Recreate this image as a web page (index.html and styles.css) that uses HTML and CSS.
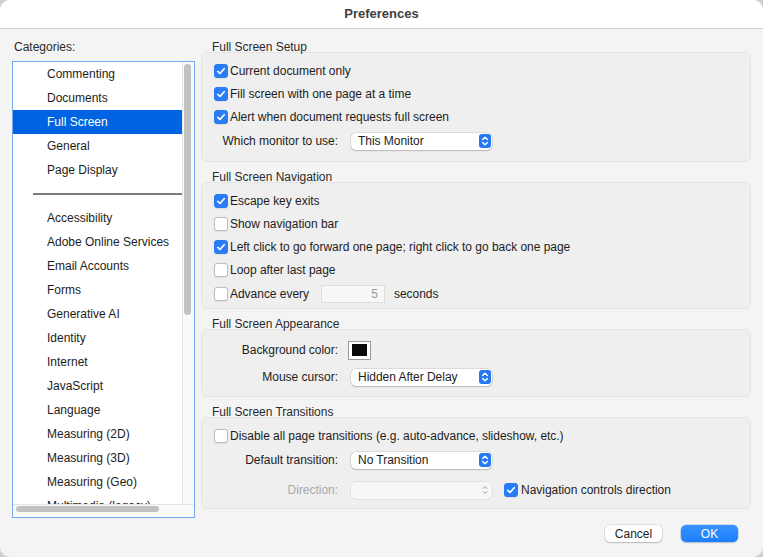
FILE: index.html
```html
<!DOCTYPE html>
<html lang="en">
<head>
  <meta charset="UTF-8">
  <title>Preferences</title>
  <link rel="stylesheet" href="styles.css">
</head>
<body>
  <div class="window">
    <header class="titlebar">Preferences</header>
    <div class="content">
      <aside class="sidebar">
        <div class="sidebar-label">Categories:</div>
        <div class="listbox">
          <div class="list-main">
            <ul class="categories">
              <li>Commenting</li>
              <li>Documents</li>
              <li class="selected">Full Screen</li>
              <li>General</li>
              <li>Page Display</li>
              <li class="sep"></li>
              <li>Accessibility</li>
              <li>Adobe Online Services</li>
              <li>Email Accounts</li>
              <li>Forms</li>
              <li>Generative AI</li>
              <li>Identity</li>
              <li>Internet</li>
              <li>JavaScript</li>
              <li>Language</li>
              <li>Measuring (2D)</li>
              <li>Measuring (3D)</li>
              <li>Measuring (Geo)</li>
              <li>Multimedia (legacy)</li>
            </ul>
            <div class="vscroll"><div class="vthumb"></div></div>
          </div>
          <div class="hscroll"><div class="hthumb"></div></div>
        </div>
      </aside>

      <main class="panel">
        <section class="group">
          <h2>Full Screen Setup</h2>
          <div class="group-box setup">
            <div class="row"><span class="box on"><svg viewBox="0 0 14 14"><path d="M3.3 7.4l2.5 2.5 4.9-5.6"/></svg></span>Current document only</div>
            <div class="row"><span class="box on"><svg viewBox="0 0 14 14"><path d="M3.3 7.4l2.5 2.5 4.9-5.6"/></svg></span>Fill screen with one page at a time</div>
            <div class="row"><span class="box on"><svg viewBox="0 0 14 14"><path d="M3.3 7.4l2.5 2.5 4.9-5.6"/></svg></span>Alert when document requests full screen</div>
            <div class="row field">
              <span class="field-label">Which monitor to use:</span>
              <div class="select">This Monitor
                <svg class="stepper" viewBox="0 0 12 14"><rect width="12" height="14" rx="3"/><path d="M3.6 5.6L6 3.2l2.4 2.4M3.6 8.4L6 10.8l2.4-2.4"/></svg>
              </div>
            </div>
          </div>
        </section>

        <section class="group">
          <h2>Full Screen Navigation</h2>
          <div class="group-box nav">
            <div class="row"><span class="box on"><svg viewBox="0 0 14 14"><path d="M3.3 7.4l2.5 2.5 4.9-5.6"/></svg></span>Escape key exits</div>
            <div class="row"><span class="box"></span>Show navigation bar</div>
            <div class="row"><span class="box on"><svg viewBox="0 0 14 14"><path d="M3.3 7.4l2.5 2.5 4.9-5.6"/></svg></span>Left click to go forward one page; right click to go back one page</div>
            <div class="row"><span class="box"></span>Loop after last page</div>
            <div class="row field">
              <span class="box"></span>Advance every
              <span class="number">5</span>
              <span class="unit">seconds</span>
            </div>
          </div>
        </section>

        <section class="group">
          <h2>Full Screen Appearance</h2>
          <div class="group-box look">
            <div class="row field">
              <span class="field-label">Background color:</span>
              <span class="swatch"><span class="swatch-fill"></span></span>
            </div>
            <div class="row field tall">
              <span class="field-label">Mouse cursor:</span>
              <div class="select">Hidden After Delay
                <svg class="stepper" viewBox="0 0 12 14"><rect width="12" height="14" rx="3"/><path d="M3.6 5.6L6 3.2l2.4 2.4M3.6 8.4L6 10.8l2.4-2.4"/></svg>
              </div>
            </div>
          </div>
        </section>

        <section class="group">
          <h2>Full Screen Transitions</h2>
          <div class="group-box trans">
            <div class="row"><span class="box"></span>Disable all page transitions (e.g. auto-advance, slideshow, etc.)</div>
            <div class="row field">
              <span class="field-label">Default transition:</span>
              <div class="select">No Transition
                <svg class="stepper" viewBox="0 0 12 14"><rect width="12" height="14" rx="3"/><path d="M3.6 5.6L6 3.2l2.4 2.4M3.6 8.4L6 10.8l2.4-2.4"/></svg>
              </div>
            </div>
            <div class="row field taller">
              <span class="field-label disabled">Direction:</span>
              <div class="select off">
                <svg class="stepper" viewBox="0 0 12 14"><path d="M4 5.4L6 3.6l2 1.8M4 8.6L6 10.4l2-1.8"/></svg>
              </div>
              <span class="box on gap"><svg viewBox="0 0 14 14"><path d="M3.3 7.4l2.5 2.5 4.9-5.6"/></svg></span>Navigation controls direction
            </div>
          </div>
        </section>
      </main>
    </div>
    <footer class="buttons">
      <button class="btn">Cancel</button>
      <button class="btn primary">OK</button>
    </footer>
  </div>
</body>
</html>
```

FILE: styles.css
```css
body { margin: 0; background: #cfcfcf; font-family: "Liberation Sans", Arial, sans-serif; font-size: 12px; color: #1d1d1d; }
.window { width: 763px; height: 557px; background: #f4f4f4; border-radius: 10px; overflow: hidden; }
.titlebar { height: 28px; line-height: 28px; background: #fff; border-bottom: 1px solid #d2d2d2; text-align: center; font-size: 13px; font-weight: bold; color: #404040; }
.content { display: flex; }

/* category list */
.sidebar { width: 183px; padding: 12px 0 0 12px; }
.sidebar-label { line-height: 12px; margin: 0 0 8px 2px; color: #2a2a2a; }
.listbox { height: 455px; border: 1px solid #78a8ec; background: #fff; display: flex; flex-direction: column; }
.list-main { flex: 1; display: flex; overflow: hidden; }
.categories { list-style: none; margin: 0; padding: 0; flex: 1; overflow: hidden; }
.categories li { height: 24px; line-height: 24px; padding-left: 34px; white-space: nowrap; }
.categories li.selected { background: #0063e1; color: #fff; }
.categories li.sep { position: relative; }
.categories li.sep::after { content: ""; position: absolute; left: 20px; right: 0; top: 11px; height: 2px; background: #7d7d7d; }
.vscroll { width: 10px; background: #fafafa; border-left: 1px solid #e6e6e6; padding: 2px 0 0 1px; }
.vthumb { width: 7px; height: 251px; border-radius: 4px; background: #c2c2c2; }
.hscroll { height: 11px; border-top: 1px solid #e6e6e6; background: #fafafa; padding: 1px 0 0 3px; }
.hthumb { width: 143px; height: 6px; border-radius: 3px; background: #c2c2c2; }

/* settings groups */
.panel { flex: 1; padding: 12px 12px 0 6px; letter-spacing: -0.03px; }
.group { margin-bottom: 9px; }
.group h2 { margin: 0 0 0 11px; font-size: 12px; font-weight: normal; line-height: 12px; color: #2a2a2a; }
.group-box { margin-top: -1px; background: #efefef; border: 1px solid #e4e4e4; border-radius: 6px; padding-left: 12px; }
.setup { padding-top: 6px; padding-bottom: 7px; }
.nav { padding-top: 6px; padding-bottom: 1px; }
.look { padding-top: 7px; padding-bottom: 5px; }
.trans { padding-top: 6px; padding-bottom: 1px; }

.row { display: flex; align-items: center; height: 23px; white-space: nowrap; }
.row.field { height: 26px; }
.row.tall { height: 28px; }
.row.taller { height: 34px; }
.field-label { width: 124px; text-align: right; margin-right: 13px; }
.field-label.disabled { color: #a9a9a9; }

.box { width: 12px; height: 12px; border: 1px solid #bdbdbd; border-radius: 3px; background: #fff; margin-right: 2px; flex: none; box-shadow: 0 0.5px 1px rgba(0,0,0,0.08); }
.box.on { background: #2a7cf6; border-color: #2a7cf6; }
.box svg { display: block; width: 12px; height: 12px; fill: none; stroke: #fff; stroke-width: 1.9; stroke-linecap: round; stroke-linejoin: round; }
.box.gap { margin-left: 12px; margin-right: 3px; }

.select { width: 133px; height: 17px; padding: 0 1px 0 7px; background: #fff; border-radius: 5px; display: flex; align-items: center; justify-content: space-between; box-shadow: 0 0 0 0.5px rgba(0,0,0,0.16), 0 1px 1.5px rgba(0,0,0,0.16); }
.select.off { justify-content: flex-end; background: #f7f7f7; box-shadow: 0 0 0 0.5px rgba(0,0,0,0.1); }
.stepper { width: 12px; height: 14px; flex: none; }
.stepper rect { fill: #2478f3; }
.stepper path { fill: none; stroke: #fff; stroke-width: 1.4; stroke-linecap: round; stroke-linejoin: round; }
.select.off .stepper path { stroke: #b9b9b9; stroke-width: 1.1; }

.number { width: 56px; height: 16px; margin-left: 12px; padding-right: 6px; background: #f7f7f7; border: 1px solid #dedede; text-align: right; line-height: 16px; color: #9a9a9a; }
.unit { margin-left: 9px; }

.swatch { margin-left: -3px; width: 15px; height: 12px; padding: 2px 3px 3px; border: 1px solid #9a9a9a; background: #fff; }
.swatch-fill { display: block; width: 15px; height: 12px; background: #0a0a0a; }

/* dialog buttons */
.buttons { display: flex; justify-content: flex-end; gap: 19px; padding: 7px 25px 0 0; }
.btn { width: 57px; height: 17px; padding: 0; border: none; border-radius: 5px; font-family: inherit; font-size: 12px; color: #1d1d1d; background: #fff; box-shadow: 0 0 0 0.5px rgba(0,0,0,0.14), 0 1px 1.5px rgba(0,0,0,0.18); }
.btn.primary { color: #fff; background: linear-gradient(#3a92ff, #1a7ff9); box-shadow: 0 0 0 0.5px rgba(0,80,200,0.3), 0 1px 1.5px rgba(0,0,0,0.15); }
```
